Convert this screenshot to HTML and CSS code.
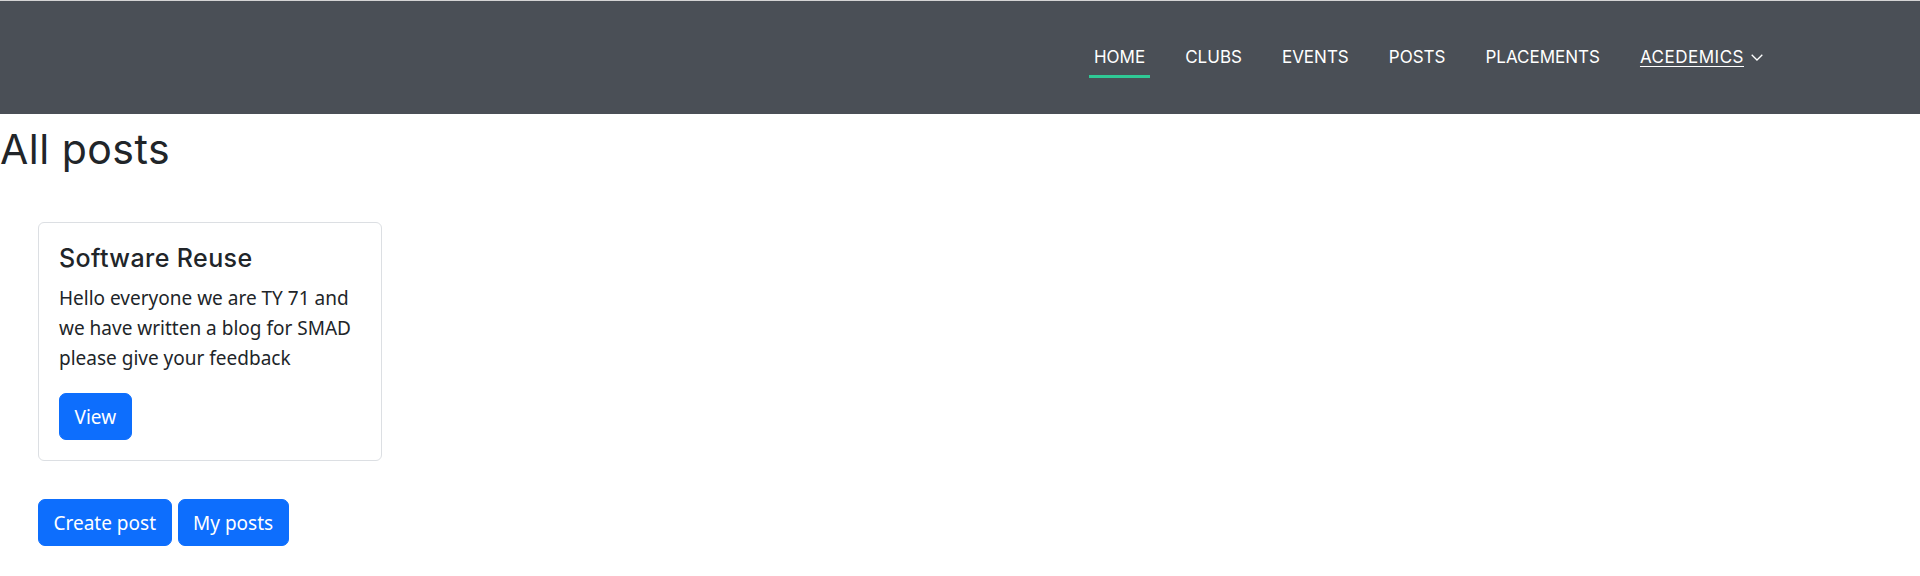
FILE: index.html
```html
<!DOCTYPE html>
<html lang="en">
<head>
<meta charset="utf-8">
<title>All posts</title>
<link rel="stylesheet" href="styles.css">
</head>
<body>
<header class="navbar">
  <nav class="nav">
    <a class="nav-link active" href="#">HOME</a>
    <a class="nav-link" href="#">CLUBS</a>
    <a class="nav-link" href="#">EVENTS</a>
    <a class="nav-link" href="#">POSTS</a>
    <a class="nav-link" href="#">PLACEMENTS</a>
    <a class="nav-link dropdown" href="#"><span class="dd-label">ACEDEMICS</span><svg class="chev" viewBox="0 0 12 7"><polyline points="0.7,0.7 6,6 11.3,0.7"/></svg></a>
  </nav>
</header>
<main>
  <h1 class="page-title">All posts</h1>
  <section class="posts">
    <div class="card">
      <div class="card-body">
        <h5 class="card-title">Software Reuse</h5>
        <p class="card-text">Hello everyone we are TY 71 and we have written a blog for SMAD please give your feedback</p>
        <a class="btn" href="#">View</a>
      </div>
    </div>
  </section>
  <div class="actions">
    <a class="btn" href="#">Create post</a>
    <a class="btn" href="#">My posts</a>
  </div>
</main>
</body>
</html>
```
FILE: styles.css
```css
* { box-sizing: border-box; }

body {
  margin: 0;
  font-family: "Noto Sans", "Open Sans", sans-serif;
  color: #212529;
  background: #fff;
}

.navbar {
  height: 114px;
  background: #4a4f56;
  border-top: 1px solid #d4d4d4;
  display: flex;
  justify-content: flex-end;
  align-items: flex-start;
  padding: 44px 152px 0 0;
}

.nav {
  display: flex;
  gap: 30px;
  align-items: flex-start;
}

.nav-link {
  font-family: Inter, "Noto Sans", sans-serif;
  font-size: 17px;
  line-height: 24px;
  color: #fff;
  text-decoration: none;
  padding: 0 5px 6px;
  border-bottom: 3px solid transparent;
}

.nav-link.active { border-bottom-color: #2fc995; }

.dropdown {
  display: flex;
  align-items: center;
  gap: 7px;
}

.dd-label {
  text-decoration: underline;
  text-underline-offset: 3px;
  letter-spacing: 0.5px;
}

.chev {
  width: 12px;
  height: 7px;
  fill: none;
  stroke: #fff;
  stroke-width: 1.3;
}

.page-title {
  font-family: Inter, "Noto Sans", sans-serif;
  font-size: 41px;
  font-weight: 400;
  letter-spacing: 0.5px;
  line-height: 48px;
  margin: 11px 0 0;
}

.posts {
  padding-left: 38px;
  margin-top: 49px;
}

.card {
  width: 344px;
  border: 1px solid #dcdfe3;
  border-radius: 6px;
}

.card-body { padding: 20px; }

.card-title {
  font-family: Inter, "Noto Sans", sans-serif;
  font-size: 25px;
  font-weight: 500;
  letter-spacing: 0.4px;
  line-height: 30px;
  margin: 0 0 10px;
}

.card-text {
  font-size: 19px;
  line-height: 30px;
  margin: 0 0 20px;
}

.btn {
  display: inline-block;
  font-size: 19px;
  line-height: 30px;
  padding: 7.5px 14.5px;
  border: 1px solid #0d6efd;
  border-radius: 7px;
  background: #0d6efd;
  color: #fff;
  text-decoration: none;
}

.actions {
  display: flex;
  gap: 6px;
  padding-left: 38px;
  margin-top: 38px;
}
```
